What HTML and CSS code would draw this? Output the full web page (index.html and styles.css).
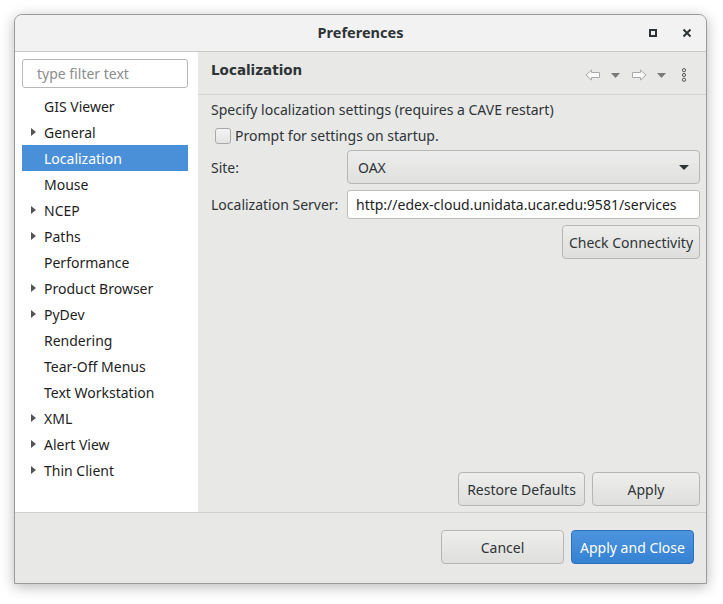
FILE: index.html
```html
<!DOCTYPE html>
<html>
<head>
<meta charset="utf-8">
<link rel="stylesheet" href="styles.css">
</head>
<body>
<div class="window">
  <div class="titlebar">
    <div class="title">Preferences</div>
    <div class="wm">
      <span class="wm-max"></span>
      <svg class="wm-close" width="10" height="10" viewBox="0 0 10 10"><path d="M1.5 1.5 L8.5 8.5 M8.5 1.5 L1.5 8.5" stroke="#2e3436" stroke-width="2"/></svg>
    </div>
  </div>
  <div class="main">
    <div class="sidebar">
      <div class="filter">type filter text</div>
      <ul class="tree">
        <li class="row"><span class="tw"></span>GIS Viewer</li>
        <li class="row"><span class="tw"><i class="tri"></i></span>General</li>
        <li class="row sel"><span class="tw"></span>Localization</li>
        <li class="row"><span class="tw"></span>Mouse</li>
        <li class="row"><span class="tw"><i class="tri"></i></span>NCEP</li>
        <li class="row"><span class="tw"><i class="tri"></i></span>Paths</li>
        <li class="row"><span class="tw"></span>Performance</li>
        <li class="row"><span class="tw"><i class="tri"></i></span>Product Browser</li>
        <li class="row"><span class="tw"><i class="tri"></i></span>PyDev</li>
        <li class="row"><span class="tw"></span>Rendering</li>
        <li class="row"><span class="tw"></span>Tear-Off Menus</li>
        <li class="row"><span class="tw"></span>Text Workstation</li>
        <li class="row"><span class="tw"><i class="tri"></i></span>XML</li>
        <li class="row"><span class="tw"><i class="tri"></i></span>Alert View</li>
        <li class="row"><span class="tw"><i class="tri"></i></span>Thin Client</li>
      </ul>
    </div>
    <div class="page">
      <div class="page-head">
        <div class="page-title">Localization</div>
        <div class="nav">
          <svg width="16" height="12" viewBox="0 0 16 12"><path d="M1 6 L6.5 1 V3.5 H14.5 V8.5 H6.5 V11 Z" fill="#fafafa" stroke="#a8a8a8" stroke-width="1"/></svg>
          <svg class="dd" width="9" height="5" viewBox="0 0 9 5"><path d="M0 0 H9 L4.5 5 Z" fill="#7a7a7a"/></svg>
          <svg width="16" height="12" viewBox="0 0 16 12"><path d="M15 6 L9.5 1 V3.5 H1.5 V8.5 H9.5 V11 Z" fill="#fafafa" stroke="#a8a8a8" stroke-width="1"/></svg>
          <svg class="dd" width="9" height="5" viewBox="0 0 9 5"><path d="M0 0 H9 L4.5 5 Z" fill="#7a7a7a"/></svg>
          <svg class="menu" width="6" height="14" viewBox="0 0 6 14"><circle cx="3" cy="2.2" r="1.6" fill="none" stroke="#555" stroke-width="1"/><circle cx="3" cy="7" r="1.6" fill="none" stroke="#555" stroke-width="1"/><circle cx="3" cy="11.8" r="1.6" fill="none" stroke="#555" stroke-width="1"/></svg>
        </div>
      </div>
      <div class="page-body">
        <div class="desc">Specify localization settings (requires a CAVE restart)</div>
        <label class="check"><span class="box"></span>Prompt for settings on startup.</label>
        <div class="form">
          <div class="lbl">Site:</div>
          <div class="combo"><span>OAX</span><svg width="10" height="5" viewBox="0 0 10 5"><path d="M0 0 H10 L5 5 Z" fill="#2e3436"/></svg></div>
          <div class="lbl">Localization Server:</div>
          <div class="input">http://edex-cloud.unidata.ucar.edu:9581/services</div>
        </div>
        <div class="right-row"><div class="btn btn-check">Check Connectivity</div></div>
        <div class="spacer"></div>
        <div class="right-row gap7"><div class="btn btn-restore">Restore Defaults</div><div class="btn btn-apply">Apply</div></div>
      </div>
    </div>
  </div>
  <div class="footer">
    <div class="btn btn-cancel">Cancel</div>
    <div class="btn btn-primary">Apply and Close</div>
  </div>
</div>
</body>
</html>
```
FILE: styles.css
```css
* { box-sizing: border-box; }
html, body { margin: 0; padding: 0; background: #ffffff; }
body {
  font-family: "Noto Sans", "Open Sans", sans-serif;
  font-size: 13.5px;
  color: #2e3436;
  padding: 14px 0 0 14px;
  width: 723px;
  height: 604px;
  overflow: hidden;
}
.window {
  width: 693px;
  height: 570px;
  border: 1px solid #9a9a9a;
  border-radius: 8px 8px 0 0;
  box-shadow: 0 3px 14px rgba(0,0,0,0.28);
  background: #e8e8e7;
  display: flex;
  flex-direction: column;
  overflow: hidden;
}
.titlebar {
  height: 37px;
  flex: none;
  background: #f2f2f2;
  border-bottom: 1px solid #c8c8c8;
  display: flex;
  align-items: center;
  justify-content: center;
  position: relative;
  padding-bottom: 3px;
}
.title { font-weight: bold; font-size: 14.5px; color: #2e3436; }
.wm {
  position: absolute;
  right: 14px;
  top: 13px;
  display: flex;
  align-items: center;
  gap: 25px;
}
.wm-max {
  width: 8px; height: 8px;
  border: 2px solid #2e3436;
}
.main { flex: none; height: 461px; display: flex; border-bottom: 1px solid #d0d0ce; }
.sidebar {
  width: 183px;
  background: #ffffff;
  padding: 7px 10px 0 7px;
  flex: none;
}
.filter {
  height: 29px;
  border: 1px solid #b8b8b6;
  border-radius: 3px;
  color: #8b8e8f;
  font-size: 14px;
  padding: 4px 0 0 14px;
  line-height: 19px;
}
.tree { list-style: none; margin: 5px 0 0 0; padding: 0; }
.row {
  height: 26px;
  display: flex;
  align-items: center;
  font-size: 14px;
  color: #1e1e1e;
}
.row.sel { background: #4a90d9; color: #ffffff; }
.tw { width: 22px; flex: none; display: flex; justify-content: flex-start; padding-left: 9px; }
.tri {
  width: 0; height: 0;
  border-top: 4.5px solid transparent;
  border-bottom: 4.5px solid transparent;
  border-left: 5px solid #555;
}
.page { flex: 1; display: flex; flex-direction: column; }
.page-head {
  height: 43px;
  border-bottom: 1px solid #d4d4d2;
  display: flex;
  align-items: flex-start;
  justify-content: space-between;
  padding: 10px 19px 0 13px;
  flex: none;
}
.page-title { font-family: "DejaVu Sans", sans-serif; font-weight: bold; font-size: 13.5px; color: #2e3436; }
.nav { display: flex; align-items: center; gap: 0; padding-top: 6px; }
.nav .dd { margin: 0 11px 0 10px; }
.nav .menu { margin-left: 4px; }
.page-body { flex: 1; display: flex; flex-direction: column; padding: 5px 6px 6px 13px; }
.desc { height: 19px; line-height: 19px; font-size: 14px; }
.check { display: flex; align-items: center; gap: 4px; margin: 8px 0 0 4px; font-size: 14px; height: 17px; }
.box {
  width: 16px; height: 16px;
  border: 1px solid #a8a8a6;
  border-radius: 3px;
  background: linear-gradient(#f4f4f4, #e4e4e4);
}
.form {
  display: grid;
  grid-template-columns: 136px 1fr;
  row-gap: 6px;
  margin-top: 6px;
  align-items: center;
}
.lbl { font-size: 14px; }
.combo {
  height: 34px;
  border: 1px solid #b6b6b3;
  border-radius: 4px;
  background: linear-gradient(#ededed, #e0e0de);
  display: flex;
  align-items: center;
  justify-content: space-between;
  padding: 0 10px 0 10px;
  font-size: 14px;
}
.input {
  height: 29px;
  border: 1px solid #bcbcb9;
  border-radius: 3px;
  background: #ffffff;
  padding: 0 0 0 8px;
  line-height: 27px;
  font-size: 14px;
  color: #1e1e1e;
}
.right-row { display: flex; justify-content: flex-end; margin-top: 6px; }
.gap7 { gap: 7px; }
.spacer { flex: 1; }
.btn {
  height: 34px;
  border: 1px solid #b6b6b3;
  border-radius: 4px;
  background: linear-gradient(#eeeeec, #dededc);
  display: flex;
  align-items: center;
  justify-content: center;
  font-size: 14px;
  color: #2e3436;
}
.btn-check { width: 138px; }
.btn-restore { width: 127px; }
.btn-apply { width: 108px; }
.footer {
  flex: 1;
  display: flex;
  justify-content: flex-end;
  align-items: flex-start;
  gap: 7px;
  padding: 17px 12px 0 0;
}
.btn-cancel { width: 123px; }
.btn-primary {
  width: 123px;
  background: linear-gradient(#4d94de, #3582d3);
  border-color: #2c6fbb;
  color: #ffffff;
}
```
